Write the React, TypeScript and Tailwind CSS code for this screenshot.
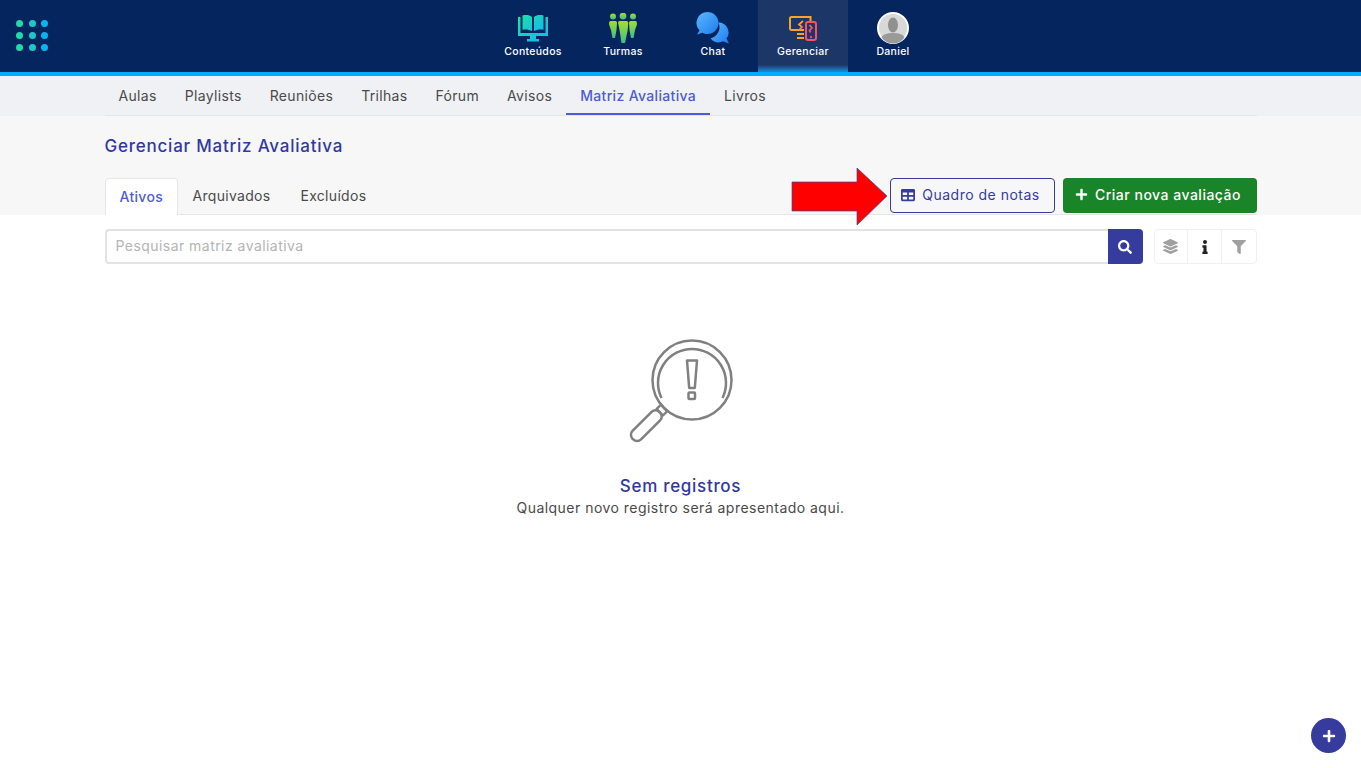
import React from "react";
import { FaSearch, FaLayerGroup, FaInfo, FaFilter, FaPlus, FaTable } from "react-icons/fa";

const navItems = ["Aulas", "Playlists", "Reuniões", "Trilhas", "Fórum", "Avisos", "Matriz Avaliativa", "Livros"];
const tabs = ["Ativos", "Arquivados", "Excluídos"];

const ContentIcon = () => (
  <svg width="32" height="28" viewBox="0 0 32 28">
    <defs>
      <linearGradient id="g1" x1="0" y1="0" x2="1" y2="1">
        <stop offset="0" stopColor="#1fe0a8" />
        <stop offset="1" stopColor="#12b8f0" />
      </linearGradient>
    </defs>
    <path d="M1 3h2.500v16h25V3H31v19H19v3h3v2.500H10V25h3v-3H1z" fill="url(#g1)" />
    <path d="M5.500 1.500C8.500 .8 12.500 .8 15 3v14c-2.500-1.700-6.500-1.900-9.500-1.300zM26.500 1.500C23.500 .8 19.500 .8 17 3v14c2.500-1.700 6.500-1.900 9.500-1.300z" fill="url(#g1)" />
  </svg>
);

const GroupIcon = () => (
  <svg width="28" height="30" viewBox="0 0 28 30">
    <defs>
      <linearGradient id="g2" x1="0" y1="0" x2="0" y2="1">
        <stop offset="0" stopColor="#a6dc2c" />
        <stop offset="1" stopColor="#3cc08c" />
      </linearGradient>
    </defs>
    <circle cx="4" cy="3.500" r="3" fill="url(#g2)" />
    <circle cx="14" cy="3" r="3.400" fill="url(#g2)" />
    <circle cx="24" cy="3.500" r="3" fill="url(#g2)" />
    <path d="M1.500 8h5C7.500 8 8 9 8 10l-.5 7L6 25H3.500L2 17 .2 12C-.2 10 .3 8 1.500 8z" fill="url(#g2)" />
    <path d="M10.500 8h7c1.200 0 2 1 1.800 2.500L18.500 18 16 30h-3.500l-1.800-12-1.500-7.500C9 9 9.300 8 10.500 8z" fill="url(#g2)" />
    <path d="M21.500 8h5c1.200 0 1.700 2 1.300 4L26 17l-1.500 8H22l-1.500-8-.5-7c0-1 .5-2 1.500-2z" fill="url(#g2)" />
  </svg>
);

const ChatIcon = () => (
  <svg width="34" height="33" viewBox="0 0 34 33">
    <defs>
      <linearGradient id="g3" x1="0" y1="0" x2="1" y2="1">
        <stop offset="0" stopColor="#5cb8fb" />
        <stop offset="1" stopColor="#1c7cf0" />
      </linearGradient>
    </defs>
    <path d="M11.500 0a11 11 0 0 1 0 22c-2 0-3.600-.4-5-1.200L1 22.500l2.500-4A11 11 0 0 1 11.500 0z" fill="url(#g3)" />
    <path d="M22.500 10.500a10 10 0 0 1 8 16l2.500 5-6-2.200a10 10 0 0 1-12.500-2.800 13 13 0 0 0 9-9.500 13 13 0 0 0-1-6.500z" fill="url(#g3)" />
  </svg>
);

const ManageIcon = () => (
  <svg width="28" height="25" viewBox="0 0 28 25" fill="none">
    <defs>
      <linearGradient id="g4" x1="0" y1="0" x2="1" y2="1">
        <stop offset="0" stopColor="#fdb21c" />
        <stop offset="1" stopColor="#fb3f7c" />
      </linearGradient>
    </defs>
    <path d="M15 14H2.500a1.500 1.500 0 0 1-1.500-1.500V2.500A1.500 1.500 0 0 1 2.500 1h19v4M15 18H8M8 22h7" stroke="#fca326" strokeWidth="2" />
    <rect x="17" y="6" width="10" height="18" rx="2" stroke="#fb5068" strokeWidth="2" />
    <path d="M14 5 10 8.500l3 2.500-3 3M20.500 9l2.500 3-2.500 2.500 1 2" stroke="url(#g4)" strokeWidth="1.700" />
    <circle cx="22" cy="21" r="1.200" fill="#fb3f7c" />
  </svg>
);

const Avatar = () => (
  <svg width="32" height="32" viewBox="0 0 32 32">
    <circle cx="16" cy="16" r="15" fill="#d8d8d8" stroke="#fff" strokeWidth="2" />
    <ellipse cx="16" cy="13" rx="5" ry="7.500" fill="#909090" />
    <path d="M4.500 25.500c1.500-3.500 6.500-4.500 11.500-4.500s10 1 11.500 4.500a14 14 0 0 1-23 0z" fill="#9a9a9a" />
  </svg>
);

const EmptyIcon = () => (
  <svg width="106" height="106" viewBox="0 0 106 106" fill="none" stroke="#808080" strokeWidth="2.500">
    <circle cx="64" cy="41" r="39.500" />
    <path d="M33.500 59A34 34 0 1 1 94.500 59" />
    <path d="M59 21.500h10l-2.200 27.500h-5.600z" strokeLinejoin="round" />
    <rect x="60.500" y="53.500" width="6.500" height="6.500" rx="1" />
    <g transform="translate(36 69) rotate(135)" strokeLinejoin="round">
      <rect x="0" y="-4.500" width="6" height="9" />
      <rect x="6" y="-6" width="38" height="12" rx="5.500" />
    </g>
  </svg>
);

const apps = [
  { label: "Conteúdos", icon: <ContentIcon /> },
  { label: "Turmas", icon: <GroupIcon /> },
  { label: "Chat", icon: <ChatIcon /> },
  { label: "Gerenciar", icon: <ManageIcon />, active: true },
  { label: "Daniel", icon: <Avatar /> },
];

export default function App() {
  return (
    <div className="relative min-h-[768px] bg-white font-['Inter','Noto_Sans',sans-serif] text-[14px] text-[#4a4a4a] overflow-hidden">
      <header className="relative h-[76px] bg-[#05255f] border-b-4 border-[#00aeff] flex justify-center">
        <div className="absolute left-[16px] top-[20px] grid grid-cols-3 gap-x-[5.700px] gap-y-[5px]">
          {["#1fdca8", "#1cc8c8", "#0bb4f0", "#1fdca8", "#1cc8c8", "#0bb4f0", "#1fdca8", "#1cc8c8", "#0bb4f0"].map((c, i) => (
            <span key={i} className="block w-[7px] h-[7px] rounded-full" style={{ backgroundColor: c }} />
          ))}
        </div>
        <nav className="flex ml-[65px]">
          {apps.map((a) => (
            <div
              key={a.label}
              className={`w-[90px] h-[72px] flex flex-col items-center text-white ${a.active ? "bg-gradient-to-b from-[#1c3668] from-90% to-[#0a8fe0]" : ""}`}
            >
              <div className="h-[32px] mt-[12px] flex items-center justify-center">{a.icon}</div>
              <span className="text-[10.500px] leading-[14px] font-medium tracking-[0.3px] mt-[1px]">{a.label}</span>
            </div>
          ))}
        </nav>
      </header>

      <div className="h-[40px] bg-[#f0f1f5]">
        <div className="w-[1152px] mx-auto flex h-full border-b border-[#e6e6ea]">
          {navItems.map((item) => {
            const active = item === "Matriz Avaliativa";
            return (
              <a
                key={item}
                className={`px-[14px] flex items-center tracking-[0.33px] ${active ? "text-[#4f5bd5] font-medium border-b-2 border-[#4f5bd5] pt-[2px]" : ""}`}
              >
                {item}
              </a>
            );
          })}
        </div>
      </div>

      <div className="h-[99px] bg-[#f7f7f7]">
        <div className="w-[1152px] mx-auto h-full flex flex-col">
          <h1 className="mt-[19px] text-[17px] leading-[22px] font-medium text-[#3139a0] tracking-[0.77px]">Gerenciar Matriz Avaliativa</h1>
          <div className="mt-[21px] flex justify-between h-[37px] border-b border-[#e6e6e6]">
            <div className="flex">
              {tabs.map((t, i) => (
                <div
                  key={t}
                  className={`pb-[2px] flex items-center tracking-[0.3px] ${i === 0 ? "bg-white border border-b-0 border-[#e8e8e8] rounded-t text-[#4f5bd5] font-medium h-[37px] px-[14px] w-[73px]" : "px-[15px]"}`}
                >
                  {t}
                </div>
              ))}
            </div>
            <div className="flex gap-[8px] h-[35px]">
              <button className="w-[165px] pb-[2px] pr-[3px] flex items-center justify-center gap-[7px] border border-[#363c9e] rounded text-[#363c9e] bg-[#f7f7fa] tracking-[0.5px]">
                <FaTable className="text-[14px]" />
                Quadro de notas
              </button>
              <button className="w-[194px] pb-[2px] pr-[3px] flex items-center justify-center gap-[7px] rounded bg-[#1a8428] text-white font-medium tracking-[0.5px]">
                <FaPlus className="text-[13px]" />
                Criar nova avaliação
              </button>
            </div>
          </div>
        </div>
      </div>

      {/* seta vermelha */}
      <svg className="absolute left-[791px] top-[167px]" width="98" height="59" viewBox="0 0 98 59">
        <path d="M1 15h65V1l30 28-30 29V44H1z" fill="#ff0000" stroke="#2d4f9e" strokeWidth="0.700" />
      </svg>

      <div className="w-[1152px] mx-auto mt-[14px] flex gap-[11px]">
        <div className="flex-1 flex h-[35px]">
          <input
            placeholder="Pesquisar matriz avaliativa"
            className="flex-1 border-2 border-[#e2e2e2] border-r-0 rounded-l px-[9px] pb-[3px] outline-none tracking-[0.45px] placeholder:text-[#b4b4b4]"
          />
          <button className="w-[35px] bg-[#363c9e] text-white rounded-r flex items-center justify-center">
            <FaSearch className="text-[14px]" />
          </button>
        </div>
        <div className="w-[103px] grid grid-cols-3 h-[35px] border border-[#f0f0f0] rounded">
          <div className="flex items-center justify-center text-[#a0a0a0] border-r border-[#f0f0f0]">
            <FaLayerGroup className="text-[15px]" />
          </div>
          <div className="flex items-center justify-center text-[#222] border-r border-[#f0f0f0] pl-[1px]">
            <FaInfo className="text-[14px]" />
          </div>
          <div className="flex items-center justify-center text-[#a0a0a0]">
            <FaFilter className="text-[14px]" />
          </div>
        </div>
      </div>

      <div className="mt-[75px] flex flex-col items-center">
        <EmptyIcon />
        <h2 className="mt-[29px] text-[17px] leading-[24px] font-medium text-[#3139a0] tracking-[0.7px]">Sem registros</h2>
        <p className="leading-[20px] tracking-[0.47px]">Qualquer novo registro será apresentado aqui.</p>
      </div>

      <button className="absolute left-[1311px] top-[718px] w-[35px] h-[35px] rounded-full bg-[#363c9e] text-white flex items-center justify-center">
        <FaPlus className="text-[14px]" />
      </button>
    </div>
  );
}
